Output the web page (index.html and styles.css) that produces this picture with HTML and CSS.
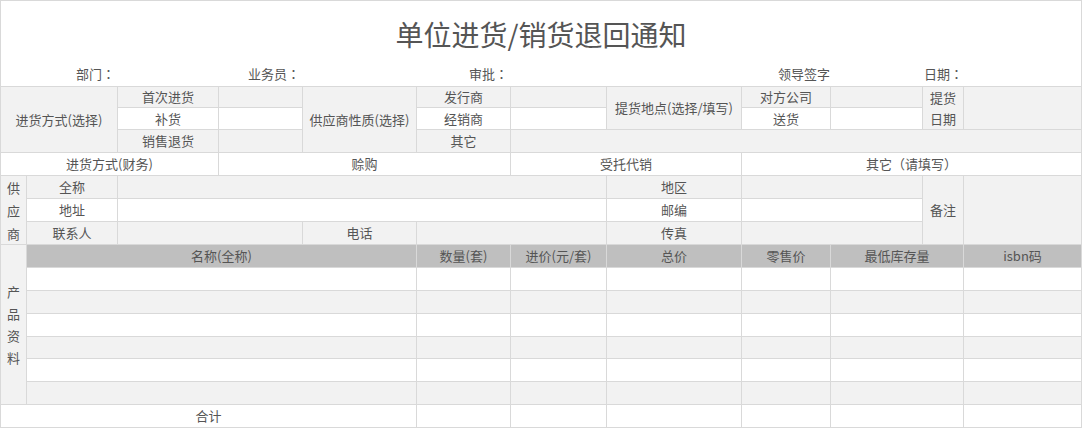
FILE: index.html
```html
<!DOCTYPE html>
<html lang="zh-CN">
<head>
<meta charset="utf-8">
<title>单位进货/销货退回通知</title>
<link rel="stylesheet" href="styles.css">
</head>
<body>
<div class="sheet">
  <div class="title">单位进货/销货退回通知</div>
  <div class="meta">
    <div class="m-dept">部门<span class="colon">：</span></div>
    <div class="m-staff">业务员<span class="colon">：</span></div>
    <div class="m-approve">审批<span class="colon">：</span></div>
    <div class="m-sign">领导签字</div>
    <div class="m-date">日期<span class="colon">：</span></div>
  </div>
  <div class="grid">
    <!-- row 1 -->
    <div class="cell g s2 r3">进货方式(选择)</div>
    <div class="cell g">首次进货</div>
    <div class="cell g"></div>
    <div class="cell g r3">供应商性质(选择)</div>
    <div class="cell g">发行商</div>
    <div class="cell g"></div>
    <div class="cell g r2">提货地点(选择/填写)</div>
    <div class="cell g">对方公司</div>
    <div class="cell g"></div>
    <div class="cell g r2 stack2">提货<br>日期</div>
    <div class="cell g r2"></div>
    <!-- row 2 -->
    <div class="cell w">补货</div>
    <div class="cell w"></div>
    <div class="cell w">经销商</div>
    <div class="cell w"></div>
    <div class="cell w">送货</div>
    <div class="cell w"></div>
    <!-- row 3 -->
    <div class="cell g">销售退货</div>
    <div class="cell g"></div>
    <div class="cell g">其它</div>
    <div class="cell g s6"></div>
    <!-- row 4 -->
    <div class="cell w s3">进货方式(财务)</div>
    <div class="cell w s3">赊购</div>
    <div class="cell w s2">受托代销</div>
    <div class="cell w s4">其它<span class="paren">（</span>请填写<span class="paren">）</span></div>
    <!-- row 5 -->
    <div class="cell g r3 vert">供<br>应<br>商</div>
    <div class="cell g">全称</div>
    <div class="cell g s5"></div>
    <div class="cell g">地区</div>
    <div class="cell g s2"></div>
    <div class="cell g r3">备注</div>
    <div class="cell g r3"></div>
    <!-- row 6 -->
    <div class="cell w">地址</div>
    <div class="cell w s5"></div>
    <div class="cell w">邮编</div>
    <div class="cell w s2"></div>
    <!-- row 7 -->
    <div class="cell g">联系人</div>
    <div class="cell g s2"></div>
    <div class="cell g">电话</div>
    <div class="cell g s2"></div>
    <div class="cell g">传真</div>
    <div class="cell g s2"></div>
    <!-- row 8 : product header -->
    <div class="cell g r7 vert vert2">产<br>品<br>资<br>料</div>
    <div class="cell h s4">名称(全称)</div>
    <div class="cell h">数量(套)</div>
    <div class="cell h">进价(元/套)</div>
    <div class="cell h">总价</div>
    <div class="cell h">零售价</div>
    <div class="cell h s2">最低库存量</div>
    <div class="cell h">isbn码</div>
    <!-- rows 9-14 -->
    <div class="cell w s4"></div><div class="cell w"></div><div class="cell w"></div><div class="cell w"></div><div class="cell w"></div><div class="cell w s2"></div><div class="cell w"></div>
    <div class="cell g s4"></div><div class="cell g"></div><div class="cell g"></div><div class="cell g"></div><div class="cell g"></div><div class="cell g s2"></div><div class="cell g"></div>
    <div class="cell w s4"></div><div class="cell w"></div><div class="cell w"></div><div class="cell w"></div><div class="cell w"></div><div class="cell w s2"></div><div class="cell w"></div>
    <div class="cell g s4"></div><div class="cell g"></div><div class="cell g"></div><div class="cell g"></div><div class="cell g"></div><div class="cell g s2"></div><div class="cell g"></div>
    <div class="cell w s4"></div><div class="cell w"></div><div class="cell w"></div><div class="cell w"></div><div class="cell w"></div><div class="cell w s2"></div><div class="cell w"></div>
    <div class="cell g s4"></div><div class="cell g"></div><div class="cell g"></div><div class="cell g"></div><div class="cell g"></div><div class="cell g s2"></div><div class="cell g"></div>
    <!-- row 15 -->
    <div class="cell w s5">合计</div>
    <div class="cell w"></div>
    <div class="cell w"></div>
    <div class="cell w"></div>
    <div class="cell w"></div>
    <div class="cell w s2"></div>
    <div class="cell w"></div>
  </div>
</div>
</body>
</html>
```

FILE: styles.css
```css
* { box-sizing: border-box; }

html, body {
  margin: 0;
  padding: 0;
  background: #ffffff;
}

body {
  font-family: "Noto Sans CJK SC", "Noto Sans", "Liberation Sans", sans-serif;
  font-size: 13px;
  color: #555555;
}

.sheet {
  width: 1082px;
  border: 1px solid #d9d9d9;
  background: #ffffff;
}

.title {
  height: 59px;
  display: flex;
  align-items: center;
  justify-content: center;
  font-size: 28px;
  color: #555555;
  padding-top: 6px;
}

.meta,
.grid {
  display: grid;
  grid-template-columns: 25px 90px 100px 83px 113px 93px 95px 134px 88px 91px 40px 117px;
  column-gap: 1px;
}

.meta {
  height: 26px;
  align-items: center;
  padding-top: 2px;
}

.meta > div {
  text-align: right;
  white-space: nowrap;
  line-height: 20px;
}

.colon {
  display: inline-block;
  font-family: "Noto Sans CJK TC", "Noto Sans CJK SC", sans-serif;
  width: 13px;
  text-align: center;
  margin-right: 2px;
}

.paren {
  display: inline-block;
  width: 13px;
  text-align: center;
}

.m-dept { grid-column: 1 / span 2; }
.m-staff { grid-column: 4 / span 1; }
.m-approve { grid-column: 6 / span 1; }
.m-sign { grid-column: 9 / span 1; }
.m-date { grid-column: 11 / span 1; margin-right: -2px; }

.grid {
  row-gap: 1px;
  background: #d9d9d9;
  border-top: 1px solid #d9d9d9;
  grid-template-rows: 20px 21px 22px 22px 22px 22px 22px 22px 22px 22px 22px 21px 22px 22px 22px;
}

.cell {
  display: flex;
  align-items: center;
  justify-content: center;
  text-align: center;
  white-space: nowrap;
  line-height: 18px;
  overflow: hidden;
}

.w { background: #ffffff; }
.g { background: #f2f2f2; }
.h { background: #bfbfbf; }

.s2 { grid-column: span 2; }
.s3 { grid-column: span 3; }
.s4 { grid-column: span 4; }
.s5 { grid-column: span 5; }
.s6 { grid-column: span 6; }

.r2 { grid-row: span 2; }
.r3 { grid-row: span 3; }
.r7 { grid-row: span 7; }

.stack2 { line-height: 21px; }

.vert {
  line-height: 23px;
  white-space: normal;
}

.vert2 { line-height: 22px; }
```
